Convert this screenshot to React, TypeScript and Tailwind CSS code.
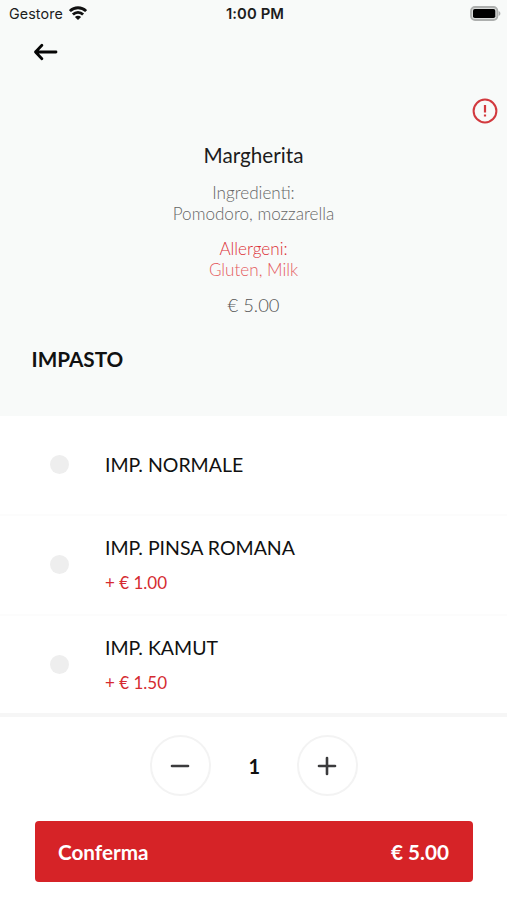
const options = [
  { name: 'IMP. NORMALE', extra: '' },
  { name: 'IMP. PINSA ROMANA', extra: '+ € 1.00' },
  { name: 'IMP. KAMUT', extra: '+ € 1.50' },
];

function StatusBar() {
  return (
    <div className="grid h-[28px] grid-cols-[1fr_auto_1fr] items-center pr-[6px] pl-[9px] font-['Inter',sans-serif] text-[#1c1d1d]">
      <div className="flex items-center gap-[6px]">
        <span className="text-[14.3px] leading-[28px] tracking-[0.1px]">Gestore</span>
        <svg className="-mt-[2px]" width="18" height="14" viewBox="0 0 18 14" fill="none" stroke="#111" strokeWidth="2.8">
          <path d="M0.9 5.1C5.4 .6 12.6 .6 17.1 5.1" />
          <path d="M3.9 8.6C6.8 5.7 11.2 5.7 14.1 8.6" />
          <path d="M9 14 5.9 10.9C7.8 9.3 10.2 9.3 12.1 10.9Z" fill="#111" stroke="none" />
        </svg>
      </div>
      <span className="text-[14.8px] leading-[28px] font-semibold tracking-[0.1px]">1:00 PM</span>
      <svg className="-mt-[2px] justify-self-end" width="31" height="15" viewBox="0 0 31 15">
        <rect x="1" y="1" width="26.4" height="13" rx="4" fill="#d9dbda" stroke="#adafae" strokeWidth="1.8" />
        <rect x="3" y="3" width="22.3" height="9" rx="1.8" fill="#000" />
        <path d="M28.6 5C31 6 31 9 28.6 10Z" fill="#adafae" />
      </svg>
    </div>
  );
}

function StepButton({ plus = false }: { plus?: boolean }) {
  return (
    <button aria-label={plus ? 'Aggiungi' : 'Rimuovi'} className="flex size-[61px] items-center justify-center rounded-full border-2 border-[#f3f3f3] bg-white">
      <svg width="20" height="20" viewBox="0 0 20 20" stroke="#3b3b3d" strokeWidth="2.6" strokeLinecap="round">
        <path d="M2 10H18" />
        {plus && <path d="M10 2V18" />}
      </svg>
    </button>
  );
}

export default function App() {
  return (
    <main className="flex h-[900px] w-[507px] flex-col overflow-hidden bg-white font-['Lato',sans-serif] text-[#111]">
      <header className="h-[416px] shrink-0 bg-[#f8faf9]">
        <StatusBar />
        <div className="h-[70px] pt-[14px] pl-[33px]">
          <svg width="26" height="20" viewBox="0 0 26 20" fill="none" stroke="#050505" strokeWidth="2.8" strokeLinecap="round" strokeLinejoin="round">
            <path d="M23 10H2.5M8.9 3.3 2.5 10 8.9 16.7" />
          </svg>
        </div>
        <div className="flex h-[45px] justify-end pr-[9px]">
          <svg width="26" height="26" viewBox="0 0 26 26" fill="none" stroke="#d2393e" strokeWidth="2">
            <circle cx="13" cy="13" r="11.4" />
            <path d="M13 7V14.6M13 16.6V18.6" strokeWidth="2.2" />
          </svg>
        </div>
        <div className="text-center">
          <h1 className="text-[20.7px] leading-[24px] text-[#1c1c1c]">Margherita</h1>
          <p className="mt-[15px] text-[17.1px] leading-[21px] font-light text-[#666] [font-feature-settings:'dlig','liga']">Ingredienti:<br />Pomodoro, mozzarella</p>
          <p className="mt-[14px] text-[17.1px] leading-[21px] font-light text-[#dc3036]">Allergeni:<br /><span className="text-[#e45b60]">Gluten, Milk</span></p>
          <p className="mt-[13px] text-[18.4px] leading-[24px] font-light text-[#555]">€ 5.00</p>
        </div>
        <h2 className="mt-[29px] pl-[31.5px] text-[20.7px] leading-[26px] font-bold">IMPASTO</h2>
      </header>
      <section className="h-[301px] shrink-0 border-b-4 border-[#f6f6f6]">
        {options.map((o) => (
          <div key={o.name} className="flex h-[100px] items-center border-b-2 border-[#fcfcfc] pb-[2px] pl-[49.5px] last:h-[97px] last:border-0 last:pb-0">
            <span className="mr-[36.5px] size-[19px] rounded-full bg-[#eee]" />
            <div className="pt-[2px]">
              <div className="text-[19.5px] leading-[24px]">{o.name}</div>
              {o.extra && <div className="mt-[11px] text-[17px] leading-[24px] text-[#d52b30]">{o.extra}</div>}
            </div>
          </div>
        ))}
      </section>
      <footer className="pt-[18px]">
        <div className="flex items-center justify-center gap-[38px]">
          <StepButton />
          <span className="w-[10px] text-center text-[20px] leading-[24px] font-bold">1</span>
          <StepButton plus />
        </div>
        <button className="mx-[35px] mt-[25px] flex h-[61px] w-[438px] items-center justify-between rounded-[4px] bg-[#d62327] pt-[2px] pr-[24px] pl-[23px] text-[20.7px] font-bold text-white">
          <span>Conferma</span><span>€ 5.00</span>
        </button>
      </footer>
    </main>
  );
}
